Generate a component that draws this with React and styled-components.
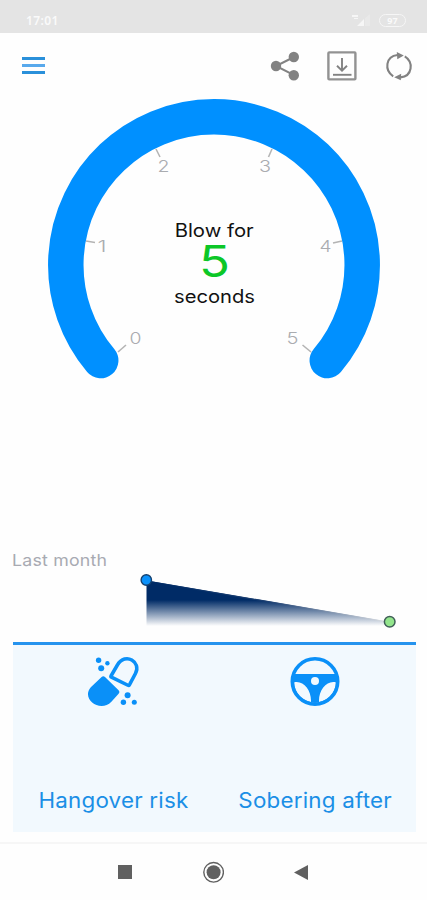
import styled, { createGlobalStyle } from 'styled-components';

const GlobalStyle = createGlobalStyle`
    * {
        box-sizing: border-box;
    }

    body {
        margin: 0;
        background-color: #fefefe;
        font-family: Inter, 'Liberation Sans', sans-serif;
    }

    svg {
        display: block;
    }
`

const Screen = styled.div`
    display: flex;
    flex-direction: column;
    width: 427px;
    height: 900px;
    background-color: #fefefe;
    overflow: hidden;
`

const StatusBar = styled.header`
    display: flex;
    justify-content: space-between;
    height: 33px;
    padding: 14px 21px 0 26px;
    background-color: #e4e4e4;
    color: #fafafa;
`

const Clock = styled.span`
    font: 600 12px/14px 'Noto Sans', sans-serif;
    letter-spacing: 0.4px;
`

const StatusIcons = styled.div`
    display: flex;
    gap: 8px;
`

const Battery = styled.span`
    display: flex;
    align-items: center;
    justify-content: center;
    width: 27px;
    height: 13px;
    border: 1.5px solid #f6f6f6;
    border-radius: 7px;
    font: 700 9px/10px 'Noto Sans', sans-serif;
`

const Toolbar = styled.nav`
    display: flex;
    align-items: center;
    justify-content: space-between;
    height: 66px;
    padding: 0 14px 0 22px;
`

const MenuButton = styled.button`
    display: flex;
    flex-direction: column;
    gap: 4px;
    width: 23px;
    margin-bottom: 1px;
    padding: 0;
    border: 0;
    background: none;
`

const MenuLine = styled.span`
    height: 3px;
    background-color: ${({ $light }) => ($light ? '#58a9ec' : '#2a90da')};
`

const Actions = styled.div`
    display: flex;
    align-items: center;
    gap: 28px;
`

const IconButton = styled.button`
    padding: 0;
    border: 0;
    background: none;
    color: #828282;
`

const GaugeSection = styled.section`
    height: 449px;

    text {
        text-anchor: middle;
    }
`

const TickLabel = styled.text`
    fill: #aaacb0;
    font-size: 16.5px;
    font-weight: 300;
`

const Message = styled.text`
    fill: #111;
    font-size: 18px;
`

const Countdown = styled.text`
    fill: #0cc727;
    font-size: 44px;
`

const History = styled.section`
    height: 94px;
`

// 字形比 Inter 略宽，横向拉伸
const HistoryTitle = styled.h2`
    width: fit-content;
    height: 24px;
    margin: 0 0 0 12px;
    color: #a8aab2;
    font-size: 16.5px;
    font-weight: 400;
    line-height: 24px;
    letter-spacing: 0.2px;
    transform: scaleX(1.075);
    transform-origin: left;
`

const Cards = styled.section`
    display: grid;
    grid-template-columns: 1fr 1fr;
    width: 403px;
    height: 190px;
    margin-left: 13px;
    border-top: 3px solid #2593ee;
    background-color: #f2f9fe;
`

const Card = styled.div`
    display: flex;
    flex-direction: column;
    align-items: center;
    justify-content: space-between;
    padding: 11px 0 17px;
    color: #0a90f8;
`

const CardLabel = styled.span`
    color: #1b8fe6;
    font-size: 21px;
    line-height: 28px;
    letter-spacing: 0.2px;
    transform: scaleX(1.065);
`

const SystemNav = styled.footer`
    display: flex;
    align-items: center;
    justify-content: space-between;
    height: 58px;
    margin-top: 10px;
    padding: 0 119px 0 118px;
    border-top: 2px solid #f6f6f6;
    color: #606060;
`

const ticks = [
    { label: '0', x: 135.5, y: 344, line: [118, 352, 126, 345] },
    { label: '1', x: 102, y: 252, line: [86, 241, 95, 242.5] },
    { label: '2', x: 163.5, y: 171.5, line: [156, 149, 160, 157] },
    { label: '3', x: 265, y: 171.5, line: [272, 149, 268.5, 157] },
    { label: '4', x: 325.5, y: 252, line: [342, 241, 333, 243] },
    { label: '5', x: 292.5, y: 344, line: [311, 352, 302.5, 345] },
];

const SignalIcon = () => (
    <svg width="20" height="13" viewBox="0 0 20 13" fill="#f6f6f6">
        <path d="M1 1h6v2H1zM3 4h4v1H3zM6 12l7-7v7z" />
        <path d="M14 4.2 19 0v12h-5z" opacity="0.3" />
    </svg>
)

const ShareIcon = () => (
    <svg width="29" height="30" viewBox="0 0 29 30" fill="currentColor">
        <path d="M24 6 6 15l18 9.2" fill="none" stroke="currentColor" strokeWidth="2" />
        <circle cx="23.8" cy="6" r="5.2" />
        <circle cx="6" cy="15" r="5.2" />
        <circle cx="23.8" cy="24.2" r="5.2" />
    </svg>
)

const DownloadIcon = () => (
    <svg width="30" height="30" viewBox="0 0 30 30" fill="none" stroke="currentColor">
        <rect x="1.4" y="1.4" width="27" height="27" rx="0.8" strokeWidth="2.4" stroke="#929292" />
        <path d="M15 7v12.6M10 14.8l5 4.8 5-4.8" strokeWidth="1.9" />
        <path d="M6 23.8h18.5" strokeWidth="1.9" />
    </svg>
)

const RefreshIcon = () => (
    <svg width="28" height="30" viewBox="0 0 28 30" fill="none" stroke="currentColor" strokeWidth="2.1">
        <path d="M8.2 25.3C-.8 19.5.4 5.3 12.5 4" />
        <path d="M19.8 5.3C28.8 11 27.6 25 15.5 26.4" />
        <path d="m11.8 1.1 7 3.4-6.5 3.8zM16.2 22.8l-7 3.5 6.6 2.9z" fill="currentColor" stroke="none" />
    </svg>
)

const PillsIcon = () => (
    <svg width="54" height="52" viewBox="0 0 54 52" fill="currentColor">
        <path d="M14.6 20.9q1.8-1.3 3.4.2l13.6 13.2q1.6 1.8 0 3.5l-7.2 8C13.5 57-6.4 43.5 3.8 31.3z" />
        <path
            d="M24.6 19.2 31 8.2C39-5.4 55.4 5.4 49 16.8l-6 11.2q-.5.9-1.5.4L25 20.4q-.9-.4-.4-1.2z"
            transform="translate(-0.6 0.8)"
            fill="none"
            stroke="currentColor"
            strokeWidth="3.5"
        />
        <circle cx="11.6" cy="4.3" r="2.7" />
        <circle cx="20.4" cy="7.2" r="2.2" />
        <circle cx="14.2" cy="12.2" r="3" />
        <circle cx="40.6" cy="39.2" r="3" />
        <circle cx="36.4" cy="46.2" r="2.7" />
        <circle cx="47.3" cy="46.2" r="2.5" />
    </svg>
)

const WheelIcon = () => (
    <svg width="50" height="50" viewBox="0 0 50 50">
        <circle cx="25" cy="25.5" r="22.7" fill="none" stroke="currentColor" strokeWidth="3.6" />
        <path
            fillRule="evenodd"
            fill="currentColor"
            d="M3 18h44c5 18-8 29-22 29S-2 36 3 18zM4 26.5C13 24 21.6 34 21 46 12 44.6 4.6 37 4 26.5zM46 26.5C37 24 28.4 34 29 46c9-1.4 16.4-9 17-19.5z"
        />
        <circle cx="25" cy="25" r="4" fill="#f2f9fe" />
    </svg>
)

const Gauge = () => (
    <GaugeSection>
        <svg width="427" height="300" viewBox="0 99 427 300">
            <path
                d="M100.7 360.5A148.2 148.2 0 1 1 327.3 360.5"
                fill="none"
                stroke="#0090ff"
                strokeWidth="35.5"
                strokeLinecap="round"
            />
            {ticks.map(({ label, x, y, line: [x1, y1, x2, y2] }) => (
                <g key={label}>
                    <line x1={x1} y1={y1} x2={x2} y2={y2} stroke="#b4b4b4" strokeWidth="1.6" />
                    <TickLabel
                        x={x}
                        y={y}
                        textLength={label === '1' ? 9 : 12}
                        lengthAdjust="spacingAndGlyphs"
                    >
                        {label}
                    </TickLabel>
                </g>
            ))}
            <Message x="214.2" y="236.7" textLength="79" lengthAdjust="spacingAndGlyphs">Blow for</Message>
            <Countdown x="214.5" y="277" textLength="31" lengthAdjust="spacingAndGlyphs">5</Countdown>
            <Message x="214.5" y="303" textLength="81" lengthAdjust="spacingAndGlyphs">seconds</Message>
        </svg>
    </GaugeSection>
)

// 最近一个月的趋势图
const HistoryChart = () => (
    <svg width="427" height="70" viewBox="0 572 427 70">
        <defs>
            <linearGradient id="fade" gradientUnits="userSpaceOnUse" x1="0" y1="600" x2="0" y2="626">
                <stop offset="0" stopColor="#002b66" />
                <stop offset="1" stopColor="#002b66" stopOpacity="0" />
            </linearGradient>
            <linearGradient id="edge" gradientUnits="userSpaceOnUse" x1="146" y1="0" x2="388" y2="0">
                <stop offset="0" stopColor="#002b66" />
                <stop offset="0.5" stopColor="#1b3e70" />
                <stop offset="1" stopColor="#dfe2e6" />
            </linearGradient>
        </defs>
        <path d="M146.5 580.5 390 622v4H146.5z" fill="url(#fade)" />
        <path d="M147 581 384 621.3" stroke="url(#edge)" strokeWidth="1.2" />
        <circle cx="146.3" cy="580" r="5.2" fill="#0a91fb" stroke="#14406f" strokeWidth="1.4" />
        <circle cx="389.7" cy="621.7" r="5.3" fill="#93e58c" stroke="#405f58" strokeWidth="1.5" />
    </svg>
)

const App = () => (
    <>
        <GlobalStyle />
        <Screen>
            <StatusBar>
                <Clock>17:01</Clock>
                <StatusIcons>
                    <SignalIcon />
                    <Battery>97</Battery>
                </StatusIcons>
            </StatusBar>
            <Toolbar>
                <MenuButton aria-label="Menu">
                    <MenuLine />
                    <MenuLine $light />
                    <MenuLine />
                </MenuButton>
                <Actions>
                    <IconButton aria-label="Share"><ShareIcon /></IconButton>
                    <IconButton aria-label="Download"><DownloadIcon /></IconButton>
                    <IconButton aria-label="Refresh"><RefreshIcon /></IconButton>
                </Actions>
            </Toolbar>
            <Gauge />
            <History>
                <HistoryTitle>Last month</HistoryTitle>
                <HistoryChart />
            </History>
            <Cards>
                <Card>
                    <PillsIcon />
                    <CardLabel>Hangover risk</CardLabel>
                </Card>
                <Card>
                    <WheelIcon />
                    <CardLabel>Sobering after</CardLabel>
                </Card>
            </Cards>
            <SystemNav>
                <svg width="14" height="14" viewBox="0 0 14 14">
                    <path d="M0 0h14v14H0z" fill="currentColor" />
                </svg>
                <svg width="22" height="22" viewBox="0 0 22 22">
                    <circle cx="11.6" cy="11.3" r="9.8" fill="none" stroke="currentColor" strokeWidth="1.4" />
                    <circle cx="11.6" cy="11.3" r="7" fill="currentColor" />
                </svg>
                <svg width="14" height="15" viewBox="0 0 14 15">
                    <path d="M14 0v15L0 7.5z" fill="currentColor" />
                </svg>
            </SystemNav>
        </Screen>
    </>
)

export default App;
